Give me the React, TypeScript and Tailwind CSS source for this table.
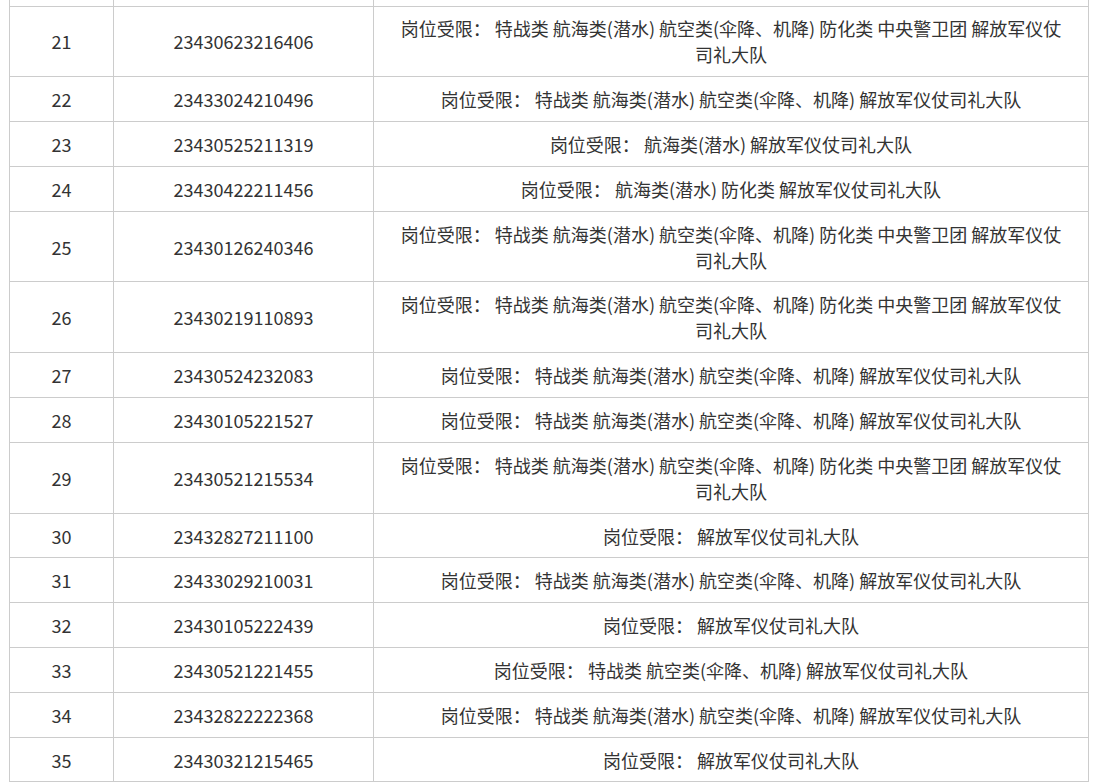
import React from 'react';

const FULL = '岗位受限： 特战类 航海类(潜水) 航空类(伞降、机降) 防化类 中央警卫团 解放军仪仗司礼大队';
const MID = '岗位受限： 特战类 航海类(潜水) 航空类(伞降、机降) 解放军仪仗司礼大队';
const SHORT = '岗位受限： 解放军仪仗司礼大队';

const rows: [number, string, string][] = [
  [21, '23430623216406', FULL],
  [22, '23433024210496', MID],
  [23, '23430525211319', '岗位受限： 航海类(潜水) 解放军仪仗司礼大队'],
  [24, '23430422211456', '岗位受限： 航海类(潜水) 防化类 解放军仪仗司礼大队'],
  [25, '23430126240346', FULL],
  [26, '23430219110893', FULL],
  [27, '23430524232083', MID],
  [28, '23430105221527', MID],
  [29, '23430521215534', FULL],
  [30, '23432827211100', SHORT],
  [31, '23433029210031', MID],
  [32, '23430105222439', SHORT],
  [33, '23430521221455', '岗位受限： 特战类 航空类(伞降、机降) 解放军仪仗司礼大队'],
  [34, '23432822222368', MID],
  [35, '23430321215465', SHORT],
];

const cell = 'border border-[#cccccc] text-center align-middle py-0 leading-[26px]';

export default function App() {
  return (
    <div className="min-h-screen bg-white pl-[9px] font-['Microsoft_YaHei','Noto_Sans_CJK_SC',sans-serif] text-[18px] text-[#333333]">
      <table className="w-[1080px] border-collapse table-fixed">
        <colgroup>
          <col className="w-[104px]" />
          <col className="w-[260px]" />
          <col />
        </colgroup>
        <tbody>
          {/* tail of the previous row */}
          <tr className="h-[6px]">
            <td className="border-x border-b border-[#cccccc] p-0" />
            <td className="border-x border-b border-[#cccccc] p-0" />
            <td className="border-x border-b border-[#cccccc] p-0" />
          </tr>
          {rows.map(([no, id, limit]) => (
            <tr key={no} className={limit === FULL ? 'h-[70.8px]' : 'h-[44.8px]'}>
              <td className={cell}>{no}</td>
              <td className={cell}>{id}</td>
              <td className={`${cell} px-[20px]`}>{limit}</td>
            </tr>
          ))}
        </tbody>
      </table>
    </div>
  );
}
